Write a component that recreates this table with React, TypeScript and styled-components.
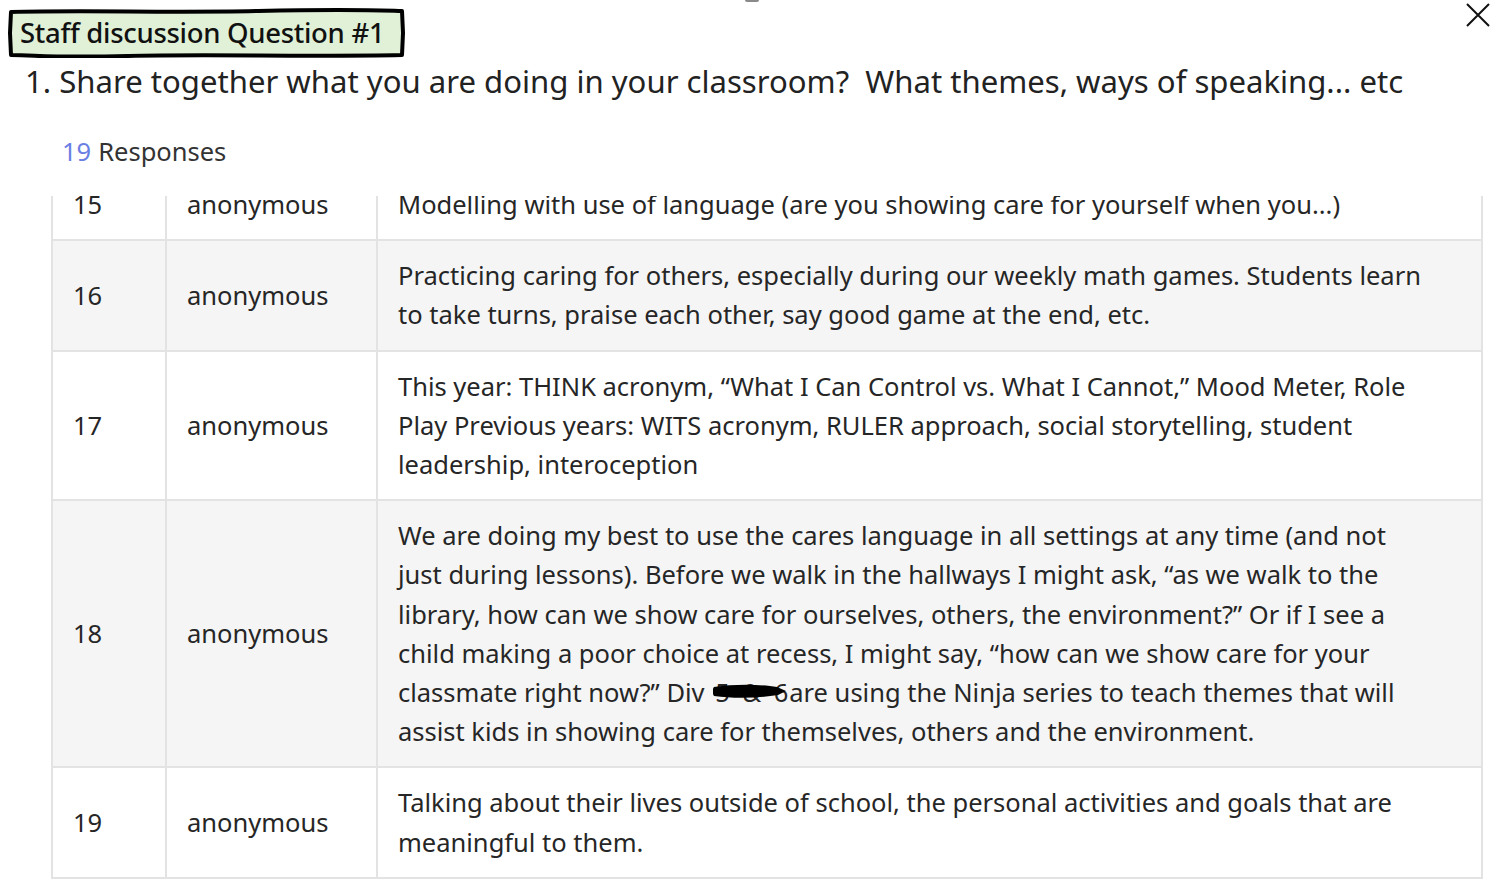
import React from "react";
import styled, { createGlobalStyle } from "styled-components";

const Global = createGlobalStyle`
  html, body { margin: 0; padding: 0; background: #ffffff; }
  body { font-family: "Noto Sans", "Open Sans", Arial, sans-serif; color: #242424; }
  * { box-sizing: border-box; }
`;

const Page = styled.div`
  width: 1500px;
  height: 890px;
  overflow: hidden;
  position: relative;
  background: #fff;
  display: flex;
  flex-direction: column;
`;

const Handle = styled.div`
  position: absolute;
  top: -2px;
  left: 745px;
  width: 14px;
  height: 4px;
  border-radius: 2px;
  background: #8a8a8a;
`;

const TopBar = styled.div`
  display: flex;
  justify-content: space-between;
  align-items: flex-start;
  padding: 8px 9px 0 8px;
`;

const Label = styled.div`
  position: relative;
  width: 397px;
  height: 50px;
  display: flex;
  align-items: center;
  padding-left: 12px;
  font-size: 27.5px;
  font-weight: 500;
  color: #111;
  letter-spacing: -0.3px;
`;

const LabelFrame = styled.svg`
  position: absolute;
  inset: 0;
  z-index: 0;
`;

const LabelText = styled.span`
  position: relative;
  z-index: 1;
  margin-top: -1px;
`;

const CloseButton = styled.button`
  border: none;
  background: none;
  padding: 0;
  margin-top: -6px;
  width: 26px;
  height: 26px;
  cursor: pointer;
`;

const Question = styled.h1`
  margin: 0;
  padding: 1px 0 0 25px;
  font-weight: 400;
  font-size: 31.1px;
  line-height: 44px;
  color: #222;
  white-space: nowrap;
`;

const ResponsesLine = styled.div`
  padding: 29px 0 0 62px;
  font-size: 25.5px;
  line-height: 38px;
  color: #333;
`;

const Count = styled.span`
  color: #6b7fe3;
  margin-right: 7px;
`;

const Scroller = styled.div`
  margin: 26px 0 0 51px;
  width: 1432px;
  height: 686px;
  overflow: hidden;
`;

const Table = styled.table`
  border-collapse: collapse;
  width: 100%;
  margin-top: -28px;
  table-layout: fixed;
`;

const Row = styled.tr<{ $shade: boolean }>`
  background: ${(p) => (p.$shade ? "#f5f5f5" : "#ffffff")};
`;

const Cell = styled.td<{ $w?: number }>`
  border: 2px solid #e3e3e3;
  padding: 15px 19px 15px 20px;
  font-size: 25.5px;
  line-height: 39.2px;
  color: #262626;
  vertical-align: middle;
  ${(p) => (p.$w ? `width: ${p.$w}px;` : "")}
`;

const Line = styled.span`
  display: block;
  white-space: nowrap;
`;

const Redact = styled.span`
  position: relative;
  display: inline-block;
  letter-spacing: 3px;
  margin-left: 4px;
  margin-right: -2px;
`;

const Scribble = styled.svg`
  position: absolute;
  left: -2px;
  top: 11px;
  width: 74px;
  height: 16px;
`;

const rows: { n: number; lines: React.ReactNode[] }[] = [
  {
    n: 15,
    lines: ["Modelling with use of language (are you showing care for yourself when you...)"],
  },
  {
    n: 16,
    lines: [
      "Practicing caring for others, especially during our weekly math games. Students learn",
      "to take turns, praise each other, say good game at the end, etc.",
    ],
  },
  {
    n: 17,
    lines: [
      "This year: THINK acronym, \u201CWhat I Can Control vs. What I Cannot,\u201D Mood Meter, Role",
      "Play Previous years: WITS acronym, RULER approach, social storytelling, student",
      "leadership, interoception",
    ],
  },
  {
    n: 18,
    lines: [
      "We are doing my best to use the cares language in all settings at any time (and not",
      "just during lessons). Before we walk in the hallways I might ask, \u201Cas we walk to the",
      "library, how can we show care for ourselves, others, the environment?\u201D Or if I see a",
      "child making a poor choice at recess, I might say, \u201Chow can we show care for your",
      <>
        {"classmate right now?\u201D Div "}
        <Redact>
          {"5 & 6"}
          <Scribble viewBox="0 0 74 16">
            <path
              d="M1 3 C20 0, 46 0, 64 3 L73 7 L65 11 C46 14, 22 15, 1 12 C-1 9, -1 5, 1 3 Z"
              fill="#000"
            />
          </Scribble>
        </Redact>
        {"are using the Ninja series to teach themes that will"}
      </>,
      "assist kids in showing care for themselves, others and the environment.",
    ],
  },
  {
    n: 19,
    lines: [
      "Talking about their lives outside of school, the personal activities and goals that are",
      "meaningful to them.",
    ],
  },
];

export default function App() {
  return (
    <Page>
      <Global />
      <Handle />
      <TopBar>
        <Label>
          <LabelFrame viewBox="0 0 397 50" width="397" height="50">
            <path
              d="M3 4 C80 2, 160 5, 250 3 S360 2, 394 3 L395 25 L394 47 C300 49, 200 46, 120 48 S30 47, 3 47 L2 25 Z"
              fill="#e0f1d7"
              stroke="#000"
              strokeWidth="4"
              strokeLinejoin="round"
            />
          </LabelFrame>
          <LabelText>Staff discussion Question #1</LabelText>
        </Label>
        <CloseButton aria-label="Close">
          <svg width="26" height="26" viewBox="0 0 26 26">
            <path d="M2 2 L24 24 M24 2 L2 24" stroke="#111" strokeWidth="2" />
          </svg>
        </CloseButton>
      </TopBar>
      <Question>
        1. Share together what you are doing in your classroom?&nbsp; What themes, ways of speaking... etc
      </Question>
      <ResponsesLine>
        <Count>19</Count>Responses
      </ResponsesLine>
      <Scroller>
        <Table>
          <tbody>
            {rows.map((r, i) => (
              <Row key={r.n} $shade={i % 2 === 1}>
                <Cell $w={114}>{r.n}</Cell>
                <Cell $w={211}>anonymous</Cell>
                <Cell>
                  {r.lines.map((l, j) => (
                    <Line key={j}>{l}</Line>
                  ))}
                </Cell>
              </Row>
            ))}
          </tbody>
        </Table>
      </Scroller>
    </Page>
  );
}
